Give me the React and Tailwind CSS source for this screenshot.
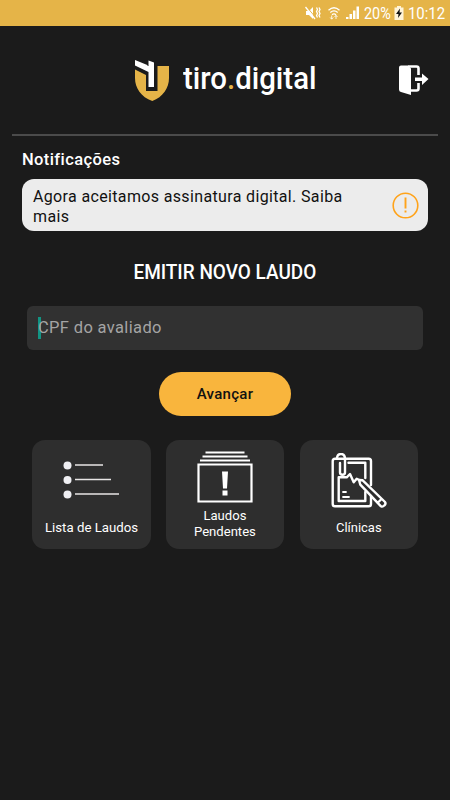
function StatusBar() {
  return (
    <div className="flex h-[26px] shrink-0 items-center justify-end bg-[#e5b448] pr-[5px] font-[Roboto,sans-serif] text-white">
      <svg className="h-[14px] w-[16px]" viewBox="0 0 16 14">
        <path d="M1 5h3l4-4v12l-4-4H1z" fill="#fff" />
        <path d="M1.500 .5l9 11" stroke="#e5b448" strokeWidth="1" />
        <path d="M.5 1l9.500 12" stroke="#fff" strokeWidth="1.300" />
        <path d="M11.500 1.500l1 2-1 2 1 2-1 2 1 2M14 1.500l1 2-1 2 1 2-1 2 1 2" fill="none" stroke="#fff" strokeWidth="1.300" />
      </svg>
      <svg className="ml-[6px] h-[14px] w-[14px]" viewBox="0 0 14 14" fill="none" stroke="#fff">
        <path d="M1.500 4.200Q7-.8 12.500 4.200M3.300 6.500Q7 3.200 10.700 6.500M5 8.700Q7 7 9 8.700" strokeWidth="1.300" />
        <path d="M4.700 13V9.500M3.200 11.500l1.500 1.700 1.500-1.700M9 13V9.500M7.500 11l1.500-1.700 1.500 1.700" opacity=".85" />
      </svg>
      <svg className="ml-[4px] h-[14px] w-[15px]" viewBox="0 0 15 14" fill="#fff">
        <path d="M1 11h2.500v2H1zM4.500 8H7v5H4.500zM8 4.500h2.500V13H8zM11.500 .5H14V13h-2.500z" />
      </svg>
      <span className="ml-[4px] mt-[2px] w-[28px] whitespace-nowrap text-[16px] leading-[26px]">
        <span className="inline-block origin-left scale-x-[0.9]">20%</span>
      </span>
      <svg className="ml-[2px] h-[14px] w-[10px]" viewBox="0 0 10 14">
        <path d="M3 0h4v1.500h2.500V14H.5V1.500H3z" fill="#fff4d8" />
        <path d="M6 2.500L2 8h2.500L4 12l4-5.500H5.500z" fill="#111" />
      </svg>
      <span className="ml-[4px] mt-[2px] w-[37px] whitespace-nowrap text-[16px] leading-[26px]">
        <span className="inline-block origin-left scale-x-[0.93]">10:12</span>
      </span>
    </div>
  );
}

function Header() {
  return (
    <header className="mx-3 flex h-[110px] shrink-0 items-start border-b-2 border-[#4b4b4b]">
      <svg className="ml-[122px] mt-[33px] h-[43px] w-[36px]" viewBox="0 0 36 43">
        <path d="M1 10.500l11 5.500v16h11.500V7H35v12c0 10-6 19-16.700 23C7 38 1 29 1 19z" fill="#e5b448" />
        <path d="M1 1l13.500 5.500V1.500L20 3.500V28h-5.500V13L1 6.500z" fill="#fff" />
        <path d="M14.500 6.500l-1.500-.6" stroke="#1b1b1b" strokeWidth=".8" />
      </svg>
      <h1 className="ml-[13px] mt-[33px] w-[136px] whitespace-nowrap font-[Roboto,sans-serif] text-[31px] font-medium leading-[40px] text-white">
        <span className="inline-block origin-left scale-x-[0.948]">tiro<span className="text-[#e5b448]">.</span>digital</span>
      </h1>
      <svg className="ml-[79px] mt-[38px] h-[32px] w-[31px]" viewBox="0 0 31 32">
        <path d="M10 2.500h8.500q2 0 2 2V11M20.500 19v5.500q0 2-2 2H13" fill="none" stroke="#fff" strokeWidth="2.600" />
        <path d="M3 1.500h7l3 3V31L3 28Q1 27.500 1 25.500V3.500q0-2 2-2z" fill="#fff" />
        <path d="M17 13.500h7V9.500l6.500 5.500-6.500 6v-4h-7z" fill="#fff" />
      </svg>
    </header>
  );
}

function ListIcon() {
  return (
    <svg className="h-[42px] w-[56px]" viewBox="0 0 56 42">
      <g fill="#efeff3"><circle cx="4.500" cy="5.500" r="4" /><circle cx="4.500" cy="20" r="4" /><circle cx="4.500" cy="34.500" r="4" /></g>
      <path d="M12 5h28M12 19.500h36M12 34h44" stroke="#e8e5e5" strokeWidth="1.700" />
    </svg>
  );
}

function PendingIcon() {
  return (
    <svg className="h-[52px] w-[56px]" viewBox="0 0 56 52" fill="none" stroke="#fff">
      <path d="M8.500 1.500h39M5.500 5.500h45M3 9.500h50" strokeWidth="2.200" />
      <path d="M1.500 13.500h53v37h-53z" strokeWidth="2.200" />
      <path d="M25 20.500h6l-1 17h-4zM25.500 39.500h5v5h-5z" fill="#fff" stroke="none" />
    </svg>
  );
}

function ClinicIcon() {
  return (
    <svg className="h-[56px] w-[58px]" viewBox="0 0 58 56" fill="none" stroke="#fff" strokeWidth="2.400" strokeLinejoin="round" strokeLinecap="round">
      <path d="M41 32V8q0-2.300-2.300-2.300H5Q2.700 5.700 2.700 8v43q0 2.300 2.300 2.300h33.700Q41 53.300 41 51v-8" />
      <path d="M18.500 9.700h16.800V25M35.300 39v9H8.700V24.300h8L20 21l3.700 8.300 3-3.600 2.600 1.300" />
      <path d="M7 4.800Q7.500 1 11 1q4 0 4 5v13.500q0 2.200-2.500 2.200T10 19.500V10" />
      <path d="M29 27l3.700.3L55 49q1.200 1.600-.5 3.300-1.800 2-3.500 1L30.300 31.700zM47.500 50l4-4" />
      <path d="M13 39h3M13 44h6" strokeWidth="1.800" />
    </svg>
  );
}

const cards = [
  { lines: ["Lista de Laudos"], Icon: ListIcon, icon: "pt-[20px] h-[80px]", text: "scale-x-[0.98]" },
  { lines: ["Laudos", "Pendentes"], Icon: PendingIcon, icon: "pt-[11px] h-[68px]", text: "scale-x-[0.97]" },
  { lines: ["Clínicas"], Icon: ClinicIcon, icon: "pt-[13px] h-[80px]", text: "scale-x-[0.96]" },
];

export default function App() {
  return (
    <div className="flex h-[800px] w-[450px] flex-col overflow-hidden bg-[#1b1b1b] font-[Roboto,sans-serif] text-white">
      <StatusBar />
      <Header />
      <main className="flex flex-col">
        <h2 className="ml-[22px] mt-[14px] h-[20px] whitespace-nowrap text-[16.5px] font-medium leading-[20px] tracking-[0.4px]">
          <span className="inline-block origin-left">Notificações</span>
        </h2>
        <div className="ml-[22px] mt-[9px] flex h-[52px] w-[406px] justify-between rounded-[12px] bg-[#ececec] pl-[11px] pr-[9px] text-[#111]">
          <p className="mt-[8px] origin-left whitespace-nowrap text-[16px] leading-[19.5px] tracking-[0.35px]">
            Agora aceitamos assinatura digital. Saiba<br />mais
          </p>
          <svg className="mt-[13px] h-[27px] w-[27px] shrink-0" viewBox="0 0 27 27" fill="none" stroke="#ffa31a">
            <circle cx="13.500" cy="13.500" r="12.300" strokeWidth="1.600" />
            <path d="M13.500 5.500v11M13.500 18.500v2" strokeWidth="1.900" />
          </svg>
        </div>
        <h2 className="mt-[28px] flex h-[26px] justify-center whitespace-nowrap text-[20.5px] font-medium leading-[26px]">
          <span className="inline-block scale-x-[0.925]">EMITIR NOVO LAUDO</span>
        </h2>
        <div className="ml-[27px] mt-[21px] flex h-[44px] w-[396px] items-center rounded-[6px] bg-[#313131] pl-[11px]">
          <span className="h-[22px] w-[3px] bg-[#129483]" />
          <span className="-ml-[3px] whitespace-nowrap text-[16.5px] leading-[22px] tracking-[0.35px] text-[#a4a4a4]">CPF do avaliado</span>
        </div>
        <button className="ml-[159px] mt-[22px] h-[44px] w-[132px] rounded-full bg-[#f9b53d] text-[15px] font-medium tracking-[0.3px] text-[#111]">
          <span className="inline-block">Avançar</span>
        </button>
        <section className="ml-[32px] mt-[24px] flex gap-[15.3px]">
          {cards.map(({ lines, Icon, icon, text }) => (
            <div key={lines[0]} className="flex h-[109px] w-[118.5px] flex-col items-center rounded-[13px] bg-[#2e2e2e]">
              <div className={icon}><Icon /></div>
              <p className={`${text} whitespace-nowrap text-center text-[13.5px] leading-[15.5px]`}>
                {lines.map((line) => <span key={line} className="block">{line}</span>)}
              </p>
            </div>
          ))}
        </section>
      </main>
    </div>
  );
}
